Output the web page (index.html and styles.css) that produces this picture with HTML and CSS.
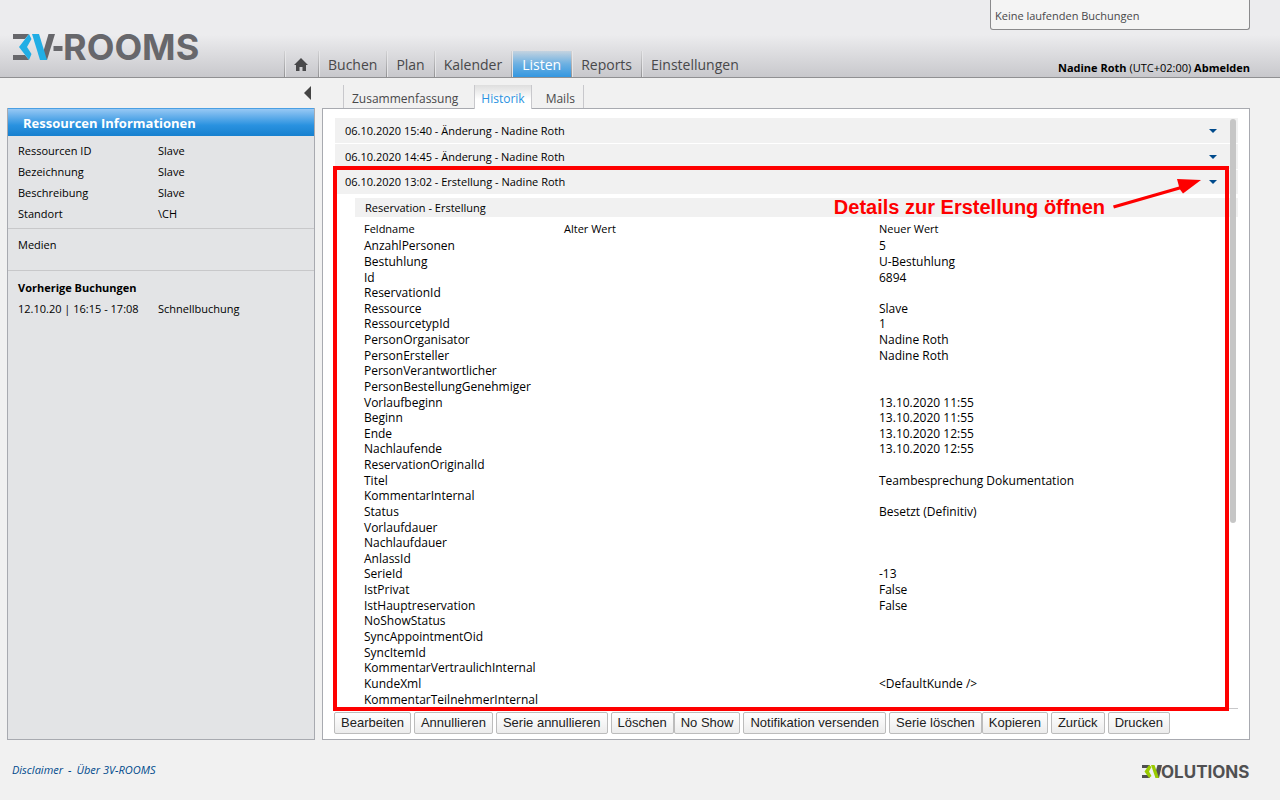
FILE: index.html
```html
<!DOCTYPE html>
<html lang="de">
<head>
<meta charset="utf-8">
<title>3V-ROOMS – Historik</title>
<link rel="stylesheet" href="styles.css">
</head>
<body>
<header class="header">
  <a class="logo" href="#" aria-label="3V-ROOMS">
    <svg width="192" height="42" viewBox="0 0 192 42" aria-hidden="true">
      <path class="mark-grey" d="M1 1H17L13 6H1ZM1 22H13L17 27H1Z"/>
      <path class="mark-blue" d="M17 1L19.500 6L15 14L19.500 21L17 27L7 14Z"/>
      <path class="mark-grey" d="M36.500 1H43L35 27H31L31.500 18Z"/>
      <path class="mark-blue" d="M20 1H27L35 27H28Z"/>
      <path class="mark-grey" d="M41.500 13H50.500V18H41.500Z"/>
      <text class="logo-text" x="51" y="27">ROOMS</text>
    </svg>
  </a>
  <nav class="nav">
    <a class="nav-item nav-home" href="#" aria-label="Start">
      <svg width="14" height="13" viewBox="0 0 14 13"><path d="M7 0L14 7H12V13H8.500V9H5.500V13H2V7H0Z"/></svg>
    </a>
    <a class="nav-item" href="#">Buchen</a>
    <a class="nav-item" href="#">Plan</a>
    <a class="nav-item" href="#">Kalender</a>
    <a class="nav-item active" href="#">Listen</a>
    <a class="nav-item" href="#">Reports</a>
    <a class="nav-item" href="#">Einstellungen</a>
  </nav>
  <div class="account">
    <div class="running">Keine laufenden Buchungen</div>
    <div class="user"><b>Nadine Roth</b> (UTC+02:00) <a href="#">Abmelden</a></div>
  </div>
</header>
<div class="layout">
  <div class="side">
    <div class="collapse-row">
      <button class="collapse" type="button" aria-label="Einklappen"><svg width="8" height="14" viewBox="0 0 8 14"><path d="M8 0V14L1 7Z"/></svg></button>
    </div>
    <aside class="info">
      <h2 class="info-title">Ressourcen Informationen</h2>
      <dl class="info-list">
        <dt>Ressourcen ID</dt><dd>Slave</dd>
        <dt>Bezeichnung</dt><dd>Slave</dd>
        <dt>Beschreibung</dt><dd>Slave</dd>
        <dt>Standort</dt><dd>\CH</dd>
      </dl>
      <div class="media">Medien</div>
      <div class="previous">
        <h3 class="previous-title">Vorherige Buchungen</h3>
        <div class="booking"><span>12.10.20 | 16:15 - 17:08</span><span>Schnellbuchung</span></div>
      </div>
    </aside>
  </div>
  <main class="content">
    <nav class="tabs">
      <a class="tab tab-first" href="#">Zusammenfassung</a>
      <a class="tab selected" href="#">Historik</a>
      <a class="tab tab-last" href="#">Mails</a>
    </nav>
    <section class="panel">
      <div class="history">
        <button class="entry" type="button">06.10.2020 15:40 - Änderung - Nadine Roth<svg class="caret" width="8" height="4" viewBox="0 0 8 4"><path d="M0 0H8L4 4Z"/></svg></button>
        <button class="entry" type="button">06.10.2020 14:45 - Änderung - Nadine Roth<svg class="caret" width="8" height="4" viewBox="0 0 8 4"><path d="M0 0H8L4 4Z"/></svg></button>
        <button class="entry entry-open" type="button">06.10.2020 13:02 - Erstellung - Nadine Roth<svg class="caret" width="8" height="4" viewBox="0 0 8 4"><path d="M0 0H8L4 4Z"/></svg></button>
        <h4 class="group">Reservation - Erstellung</h4>
        <table class="fields">
          <thead><tr><th class="col-name">Feldname</th><th class="col-old">Alter Wert</th><th>Neuer Wert</th></tr></thead>
          <tbody>
            <tr><td>AnzahlPersonen</td><td></td><td>5</td></tr>
            <tr><td>Bestuhlung</td><td></td><td>U-Bestuhlung</td></tr>
            <tr><td>Id</td><td></td><td>6894</td></tr>
            <tr><td>ReservationId</td><td></td><td></td></tr>
            <tr><td>Ressource</td><td></td><td>Slave</td></tr>
            <tr><td>RessourcetypId</td><td></td><td>1</td></tr>
            <tr><td>PersonOrganisator</td><td></td><td>Nadine Roth</td></tr>
            <tr><td>PersonErsteller</td><td></td><td>Nadine Roth</td></tr>
            <tr><td>PersonVerantwortlicher</td><td></td><td></td></tr>
            <tr><td>PersonBestellungGenehmiger</td><td></td><td></td></tr>
            <tr><td>Vorlaufbeginn</td><td></td><td>13.10.2020 11:55</td></tr>
            <tr><td>Beginn</td><td></td><td>13.10.2020 11:55</td></tr>
            <tr><td>Ende</td><td></td><td>13.10.2020 12:55</td></tr>
            <tr><td>Nachlaufende</td><td></td><td>13.10.2020 12:55</td></tr>
            <tr><td>ReservationOriginalId</td><td></td><td></td></tr>
            <tr><td>Titel</td><td></td><td>Teambesprechung Dokumentation</td></tr>
            <tr><td>KommentarInternal</td><td></td><td></td></tr>
            <tr><td>Status</td><td></td><td>Besetzt (Definitiv)</td></tr>
            <tr><td>Vorlaufdauer</td><td></td><td></td></tr>
            <tr><td>Nachlaufdauer</td><td></td><td></td></tr>
            <tr><td>AnlassId</td><td></td><td></td></tr>
            <tr><td>SerieId</td><td></td><td>-13</td></tr>
            <tr><td>IstPrivat</td><td></td><td>False</td></tr>
            <tr><td>IstHauptreservation</td><td></td><td>False</td></tr>
            <tr><td>NoShowStatus</td><td></td><td></td></tr>
            <tr><td>SyncAppointmentOid</td><td></td><td></td></tr>
            <tr><td>SyncItemId</td><td></td><td></td></tr>
            <tr><td>KommentarVertraulichInternal</td><td></td><td></td></tr>
            <tr><td>KundeXml</td><td></td><td>&lt;DefaultKunde /&gt;</td></tr>
            <tr><td>KommentarTeilnehmerInternal</td><td></td><td></td></tr>
          </tbody>
        </table>
        <div class="scroll-thumb"></div>
        <div class="highlight"></div>
        <div class="callout">
          <span>Details zur Erstellung öffnen</span>
          <svg width="90" height="32" viewBox="0 0 90 32"><path d="M0 27.500L66 8.500L64 1L88 2L70 15.500L67 11.500L1 30.500Z"/></svg>
        </div>
      </div>
      <div class="actions">
        <button class="action" type="button">Bearbeiten</button>
        <button class="action" type="button">Annullieren</button>
        <button class="action" type="button">Serie annullieren</button>
        <span class="action-pair"><button class="action" type="button">Löschen</button><button class="action" type="button">No Show</button></span>
        <button class="action" type="button">Notifikation versenden</button>
        <span class="action-pair"><button class="action" type="button">Serie löschen</button><button class="action" type="button">Kopieren</button></span>
        <button class="action" type="button">Zurück</button>
        <button class="action" type="button">Drucken</button>
      </div>
    </section>
  </main>
</div>
<footer class="footer">
  <div class="footer-links"><a href="#">Disclaimer</a><span>-</span><a href="#">Über 3V-ROOMS</a></div>
  <a class="vendor" href="#" aria-label="3VOLUTIONS">
    <svg width="108" height="22" viewBox="0 0 108 22" aria-hidden="true">
      <path class="vendor-grey" d="M2 3H10L8 6H2ZM2 13H8L10 16H2Z"/>
      <path class="vendor-green" d="M9 3L11.500 5L9 9.500L11.500 14L9 16L4.500 9.500Z"/>
      <path class="vendor-grey" d="M17.500 3H22L19 16H16L15 12Z"/>
      <path class="vendor-green" d="M11 3H14.500L19 16H15.500Z"/>
      <text class="vendor-text" x="21" y="16">OLUTIONS</text>
    </svg>
  </a>
</footer>
</body>
</html>
```

FILE: styles.css
```css
* { box-sizing: border-box; }

body {
  margin: 0;
  min-height: 100vh;
  display: flex;
  flex-direction: column;
  background: #f1f1f1;
  color: #000;
  font: 12px/16px "Open Sans", "Noto Sans", sans-serif;
}

a { color: inherit; text-decoration: none; }
button { font: inherit; color: inherit; }
h2, h3, h4, dl, dd { margin: 0; }

.header {
  display: flex;
  height: 78px;
  padding: 0 30px 0 12px;
  background: linear-gradient(#ececee 0, #ececee 35px, #c8c8cc 77px);
  border-bottom: 1px solid #909092;
}

.logo { width: 272px; padding-top: 33px; }
.logo svg, .vendor svg { overflow: visible; }
.mark-grey { fill: #67676b; }
.mark-blue { fill: #21aee5; }
.logo-text { font: 700 36px Inter, sans-serif; fill: #67676b; }

.nav { display: flex; align-items: flex-end; flex: 1; }
.nav-item {
  height: 26px;
  padding: 0 9px;
  border-left: 1px solid #9c9c9e;
  border-image: linear-gradient(#d5d5d7, #909092) 1;
  box-shadow: inset 1px 0 #e6e6e8;
  color: #48484a;
  font-size: 14px;
  line-height: 27px;
}
.nav-home { padding: 7px 10px 0 9px; line-height: 0; }
.nav-home svg { fill: #48484a; }
.nav-item.active {
  padding: 0 10px;
  background: linear-gradient(#c4d3e0, #6cb0e2 50%, #3497e0);
  color: #fff;
}

.account {
  display: flex;
  flex-direction: column;
  justify-content: space-between;
  align-items: flex-end;
  padding-bottom: 1px;
}
.running {
  width: 260px;
  height: 30px;
  padding: 8px 4px;
  background: #f4f4f4;
  border: 1px solid #8a8a8c;
  border-top: 0;
  border-radius: 0 0 3px 3px;
  color: #48484a;
  font-size: 11px;
}
.user { font-size: 11px; }
.user a { font-weight: 700; }

.layout { display: flex; flex: 1; gap: 7px; padding: 0 30px 0 7px; }
.side { display: flex; flex-direction: column; width: 308px; }
.collapse-row { display: flex; justify-content: flex-end; height: 30px; padding: 7px 4px; }
.collapse { padding: 0; border: 0; background: none; line-height: 0; fill: #444; }

.info { flex: 1; background: #e3e4e6; border: 1px solid #a8aab0; }
.info-title {
  height: 28px;
  padding-left: 15px;
  border-top: 1px solid #4a9fe3;
  margin-top: -1px;
  background: linear-gradient(#97c8f4, #2a92e0 60%, #1680cf);
  color: #fff;
  font-size: 13px;
  line-height: 29px;
}
.info-list, .booking { display: grid; grid-template-columns: 140px 1fr; }
.info-list { padding: 4px 10px; line-height: 21px; font-size: 11px; }
.media { height: 43px; padding: 8px 10px; border: solid #c8c8ca; border-width: 1px 0; font-size: 11px; }
.previous { padding: 9px 10px; font-size: 11px; }
.previous-title { margin-bottom: 5px; font-size: 11px; }

.content { display: flex; flex-direction: column; flex: 1; }
.tabs { display: flex; align-items: flex-end; height: 31px; padding-left: 21px; margin-bottom: -1px; }
.tab {
  height: 24px;
  padding: 0 8px;
  color: #48484a;
  font-size: 12px;
  line-height: 27px;
}
.tab-first { padding-right: 16px; border-left: 1px solid #c8c8cc; }
.tab-last { padding-left: 14px; border-right: 1px solid #c8c8cc; }
.tab.selected {
  padding: 0 6px;
  border: solid #c8c8cc;
  border-width: 0 1px;
  background: linear-gradient(#dedede, #fff 60%);
  color: #2a92e0;
  z-index: 1;
}

.panel {
  display: flex;
  flex-direction: column;
  flex: 1;
  padding: 9px 11px 5px;
  background: #fff;
  border: 1px solid #a8aab0;
}
.history { position: relative; flex: 1; padding-bottom: 1px; border-bottom: 1px solid #c8c8ca; margin-left: 1px; }
.entry {
  display: flex;
  justify-content: space-between;
  align-items: center;
  width: 100%;
  height: 25px;
  margin-bottom: 1px;
  padding: 0 21px 0 10px;
  border: 0;
  background: #f1f1f1;
  font-size: 11px;
}
.entry-open { height: 24px; }
.caret { fill: #004a8c; }
.group {
  height: 19px;
  margin: 4px 0 4px 20px;
  padding-left: 10px;
  background: #f1f1f1;
  font-size: 11px;
  font-weight: 400;
  line-height: 19px;
}
.fields {
  width: 100%;
  height: 486px;
  padding-left: 29px;
  border-spacing: 0;
  table-layout: fixed;
  line-height: 15px;
}
.fields th { height: 17px; padding: 0; text-align: left; vertical-align: top; font-weight: 400; font-size: 11px; }
.fields td { padding: 0; }
.col-name { width: 200px; }
.col-old { width: 315px; }

.scroll-thumb {
  position: absolute;
  top: 1px;
  right: 2px;
  width: 6px;
  height: 404px;
  border-radius: 3px;
  background: #c6c6c6;
}
.highlight {
  position: absolute;
  inset: 48px 9px -3px -2px;
  border: 4px solid #fe0000;
  pointer-events: none;
}
.callout {
  position: absolute;
  top: 60px;
  right: 35px;
  display: flex;
  gap: 8px;
  color: #fe0000;
  fill: #fe0000;
  font: 700 20px/58px "Liberation Sans", Arial, sans-serif;
}

.actions { display: flex; gap: 3px; padding-top: 3px; }
.action-pair { display: flex; }
.action {
  height: 22px;
  padding: 0 6px;
  border: 1px solid #bcbcbc;
  border-radius: 2px;
  background: linear-gradient(#fff, #ececec);
  color: #222;
  font: 13px/20px "Liberation Sans", Arial, sans-serif;
}

.footer {
  display: flex;
  justify-content: space-between;
  height: 60px;
  padding: 22px 32px 0 12px;
}
.footer-links { display: flex; gap: 5px; color: #004a8c; font-size: 11px; font-style: italic; }
.vendor-grey, .vendor-text { fill: #505052; }
.vendor-green { fill: #9acb00; }
.vendor-text { font: 700 17px Inter, sans-serif; }
```
